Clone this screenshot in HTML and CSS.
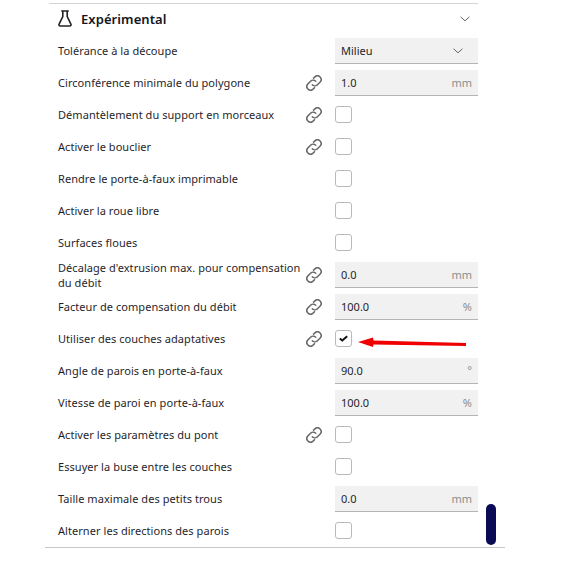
FILE: index.html
```html
<!DOCTYPE html>
<html>
<head>
  <title>Expérimental</title>
  <link rel="stylesheet" href="styles.css">
</head>
<body>
  <svg width="0" height="0" class="defs">
    <symbol id="link" viewBox="1.500 1.500 13 13">
      <path d="M6.600 9.400a3 3 0 0 0 4.200 0l2.400-2.400a3 3 0 0 0-4.200-4.200L7.600 4.200M9.400 6.600a3 3 0 0 0-4.200 0L2.800 9a3 3 0 0 0 4.200 4.200l1.400-1.400" fill="none" stroke="#666" stroke-width="1.250" stroke-linecap="round"/>
    </symbol>
    <symbol id="chevron" viewBox="0 0 10 6">
      <path d="M.5 .8l4.500 4 4.500-4" fill="none" stroke="#666" stroke-width="1"/>
    </symbol>
  </svg>

  <div class="panel">
    <div class="section-header">
      <svg class="flask" width="14" height="17" viewBox="0 0 14 17">
        <path d="M3.200 1h7.600M4.800 1v5.500L1.100 14.200a1.200 1.200 0 0 0 1.100 1.800h9.600a1.200 1.200 0 0 0 1.100-1.800L9.200 6.500V1" fill="none" stroke="#222" stroke-width="1.600"/>
      </svg>
      <h2 class="section-title">Expérimental</h2>
      <svg class="section-chevron" width="10" height="6"><use href="#chevron"/></svg>
    </div>

    <div class="row">
      <span class="label">Tolérance à la découpe</span>
      <span class="link-slot"></span>
      <div class="field">Milieu<svg class="field-chevron" width="10" height="6"><use href="#chevron"/></svg></div>
    </div>
    <div class="row">
      <span class="label">Circonférence minimale du polygone</span>
      <span class="link-slot"><svg width="16" height="16"><use href="#link"/></svg></span>
      <div class="field">1.0<span class="unit">mm</span></div>
    </div>
    <div class="row">
      <span class="label">Démantèlement du support en morceaux</span>
      <span class="link-slot"><svg width="16" height="16"><use href="#link"/></svg></span>
      <span class="checkbox"></span>
    </div>
    <div class="row">
      <span class="label">Activer le bouclier</span>
      <span class="link-slot"><svg width="16" height="16"><use href="#link"/></svg></span>
      <span class="checkbox"></span>
    </div>
    <div class="row">
      <span class="label">Rendre le porte-à-faux imprimable</span>
      <span class="link-slot"></span>
      <span class="checkbox"></span>
    </div>
    <div class="row">
      <span class="label">Activer la roue libre</span>
      <span class="link-slot"></span>
      <span class="checkbox"></span>
    </div>
    <div class="row">
      <span class="label">Surfaces floues</span>
      <span class="link-slot"></span>
      <span class="checkbox"></span>
    </div>
    <div class="row">
      <span class="label label-wrap">Décalage d'extrusion max. pour compensation du débit</span>
      <span class="link-slot"><svg width="16" height="16"><use href="#link"/></svg></span>
      <div class="field">0.0<span class="unit">mm</span></div>
    </div>
    <div class="row">
      <span class="label">Facteur de compensation du débit</span>
      <span class="link-slot"><svg width="16" height="16"><use href="#link"/></svg></span>
      <div class="field">100.0<span class="unit">%</span></div>
    </div>
    <div class="row">
      <span class="label">Utiliser des couches adaptatives</span>
      <span class="link-slot"><svg width="16" height="16"><use href="#link"/></svg></span>
      <span class="checkbox">
        <svg width="9" height="7" viewBox="0 0 9 7"><path d="M.8 3.500l2.500 2L8.200 1.300" fill="none" stroke="#111" stroke-width="2"/></svg>
      </span>
    </div>
    <div class="row">
      <span class="label">Angle de parois en porte-à-faux</span>
      <span class="link-slot"></span>
      <div class="field">90.0<span class="unit unit-raised">°</span></div>
    </div>
    <div class="row">
      <span class="label">Vitesse de paroi en porte-à-faux</span>
      <span class="link-slot"></span>
      <div class="field">100.0<span class="unit">%</span></div>
    </div>
    <div class="row">
      <span class="label">Activer les paramètres du pont</span>
      <span class="link-slot"><svg width="16" height="16"><use href="#link"/></svg></span>
      <span class="checkbox"></span>
    </div>
    <div class="row">
      <span class="label">Essuyer la buse entre les couches</span>
      <span class="link-slot"></span>
      <span class="checkbox"></span>
    </div>
    <div class="row">
      <span class="label">Taille maximale des petits trous</span>
      <span class="link-slot"></span>
      <div class="field">0.0<span class="unit">mm</span></div>
    </div>
    <div class="row">
      <span class="label">Alterner les directions des parois</span>
      <span class="link-slot"></span>
      <span class="checkbox"></span>
    </div>
  </div>
  <div class="panel-end"></div>

  <!-- annotation and scroll handle sit over the panel -->
  <svg class="arrow" width="110" height="14" viewBox="0 0 110 14">
    <path d="M0 6L15 1.500L15.500 4.500L108 7L108 10L15.500 8.500L15 11z" fill="#f00000"/>
  </svg>
  <div class="scroll-handle"></div>
</body>
</html>
```

FILE: styles.css
```css
* {
  margin: 0;
  padding: 0;
  box-sizing: border-box;
}

body {
  position: relative;
  width: 578px;
  height: 574px;
  padding-top: 3px;
  overflow: hidden;
  background-color: #ffffff;
  color: #1f1f2b;
  font-family: "Noto Sans", sans-serif;
  font-size: 11px;
}

.defs {
  position: absolute;
}

.panel {
  width: 429px;
  margin-left: 49px;
  border-top: 1px solid #d4d4d4;
}

.panel-end {
  width: 460px;
  margin-left: 45px;
  border-top: 1px solid #c8c8c8;
}

/* Section header */
.section-header {
  display: flex;
  align-items: center;
  height: 31px;
  padding-left: 9px;
  padding-bottom: 2px;
}

.flask {
  flex: none;
}

.section-title {
  margin-left: 9px;
  font-size: 13px;
  font-weight: 600;
  letter-spacing: 0.08px;
  color: #141420;
}

.section-chevron {
  margin-left: auto;
  margin-right: 8px;
}

/* Setting rows */
.row {
  display: flex;
  align-items: center;
  height: 32px;
  padding-left: 9px;
}

.label {
  flex: none;
  width: 243px;
  margin-bottom: 2px;
  line-height: 15px;
  letter-spacing: 0.055px;
}

.label-wrap {
  margin-bottom: 0;
}

.link-slot {
  display: flex;
  align-items: center;
  justify-content: center;
  flex: none;
  width: 16px;
  height: 16px;
  margin-left: 5px;
  margin-right: 13px;
}

.field {
  display: flex;
  align-items: center;
  justify-content: space-between;
  flex: none;
  width: 143px;
  height: 26px;
  padding: 0 6px;
  background-color: #f1f1f1;
  border-bottom: 1px solid #b4b4b4;
}

.field-chevron {
  margin-right: 9px;
}

.unit {
  color: #8c8c8c;
}

.unit-raised {
  margin-top: -3px;
}

.checkbox {
  display: flex;
  align-items: center;
  justify-content: center;
  flex: none;
  width: 17px;
  height: 17px;
  margin-bottom: 1px;
  background-color: #ffffff;
  border: 1px solid #b9b9b9;
  border-radius: 3px;
}

/* Overlays */
.arrow {
  position: absolute;
  left: 358px;
  top: 336px;
}

.scroll-handle {
  position: absolute;
  left: 486px;
  top: 504px;
  width: 10px;
  height: 41px;
  background-color: #0a0a55;
  border-radius: 5px;
}
```
